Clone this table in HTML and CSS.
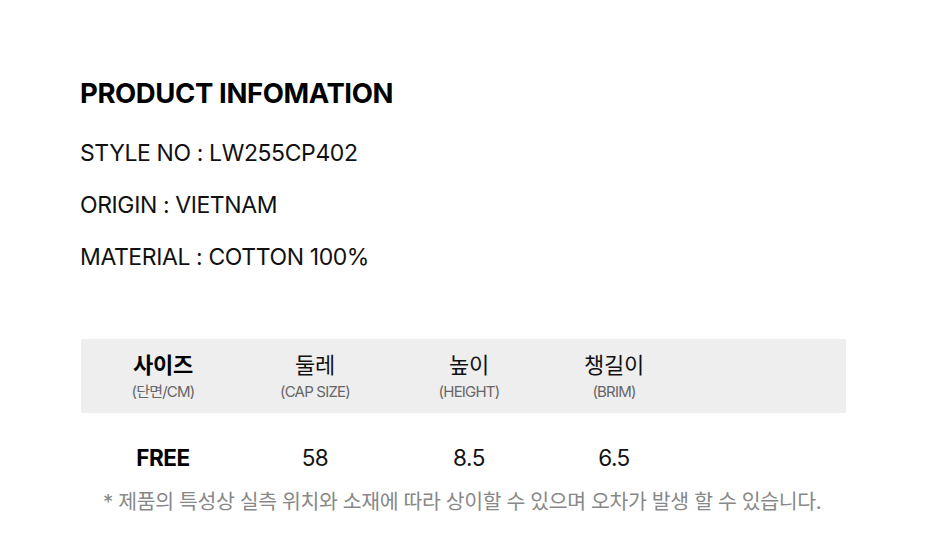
FILE: index.html
```html
<!DOCTYPE html>
<html lang="ko">
<head>
<meta charset="utf-8">
<link rel="stylesheet" href="styles.css">
</head>
<body>
<div class="page">
  <h1 class="title">PRODUCT INFOMATION</h1>
  <div class="infos">
    <p class="info">STYLE NO : LW255CP402</p>
    <p class="info">ORIGIN : VIETNAM</p>
    <p class="info">MATERIAL : COTTON 100%</p>
  </div>

  <div class="table">
    <div class="row head">
      <div class="cell"><span class="ko strong">사이즈</span><span class="sub">(단면/CM)</span></div>
      <div class="cell"><span class="ko">둘레</span><span class="sub">(CAP SIZE)</span></div>
      <div class="cell"><span class="ko">높이</span><span class="sub">(HEIGHT)</span></div>
      <div class="cell"><span class="ko">챙길이</span><span class="sub">(BRIM)</span></div>
    </div>
    <div class="row body">
      <div class="cell strong">FREE</div>
      <div class="cell">58</div>
      <div class="cell">8.5</div>
      <div class="cell">6.5</div>
    </div>
  </div>
  <p class="note">* 제품의 특성상 실측 위치와 소재에 따라 상이할 수 있으며 오차가 발생 할 수 있습니다.</p>
</div>
</body>
</html>
```
FILE: styles.css
```css
html, body {
  margin: 0;
  padding: 0;
  background: #ffffff;
}
body {
  font-family: Inter, "Noto Sans CJK KR", sans-serif;
  color: #111;
}
.page {
  padding: 74px 0 0 80px;
  width: 858px;
}
.title {
  margin: 0;
  font-size: 27.5px;
  line-height: 38px;
  font-weight: 700;
  letter-spacing: -0.4px;
  color: #000;
}
.infos {
  margin-top: 22px;
}
.info {
  margin: 14px 0 0 0;
  font-size: 23px;
  line-height: 38px;
  letter-spacing: -0.4px;
  color: #111;
}
.info:first-child {
  margin-top: 0;
}
.table {
  margin: 63px 0 0 1px;
  width: 765px;
}
.row {
  display: grid;
  grid-template-columns: 164px 140px 168px 122px;
}
.head {
  background: #eeeeee;
  height: 74px;
  align-items: center;
}
.cell {
  display: flex;
  flex-direction: column;
  align-items: center;
  text-align: center;
}
.ko {
  font-size: 22px;
  line-height: 27px;
  color: #111;
  letter-spacing: -0.3px;
}
.strong {
  font-weight: 700;
  color: #000;
}
.sub {
  margin-top: 4px;
  font-size: 15px;
  line-height: 18px;
  color: #666;
  letter-spacing: -0.8px;
}
.body {
  height: 88px;
  align-items: center;
}
.body .cell {
  font-size: 22.5px;
  letter-spacing: -0.5px;
  padding-top: 0;
}
.note {
  margin: -12px 0 0 23px;
  font-size: 20.5px;
  line-height: 26px;
  color: #888;
  letter-spacing: -0.4px;
}
```
